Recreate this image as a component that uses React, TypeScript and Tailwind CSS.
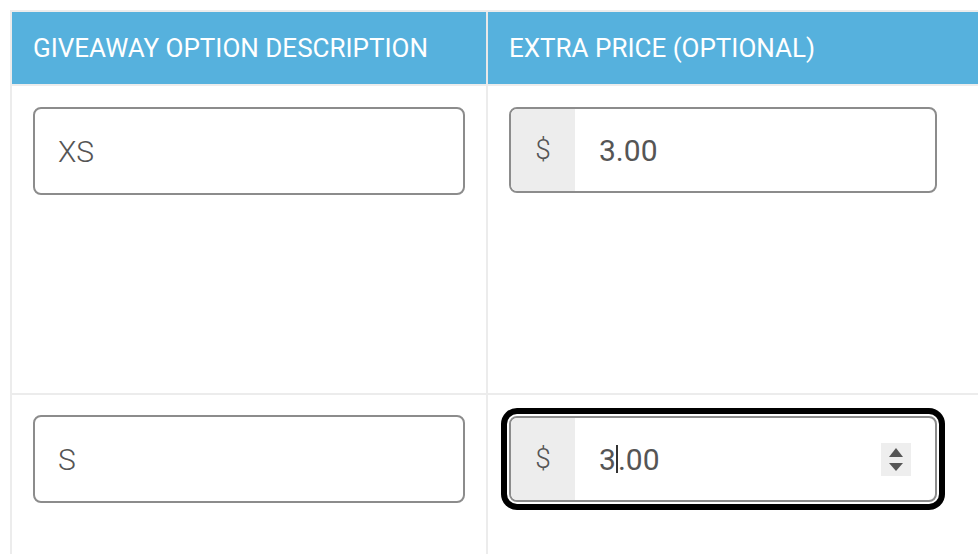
import React from 'react';

const font = { fontFamily: 'Roboto, "Liberation Sans", sans-serif' };

const TextBox = ({ value }: { value: string }) => (
  <div className="flex h-[88px] w-[432px] items-center rounded-[8px] border-2 border-[#8c8c8c] bg-white pl-[23px] text-[30px] font-light text-[#555]">
    {value}
  </div>
);

const PriceBox = ({ value, focused = false }: { value: string; focused?: boolean }) => (
  <div
    className={
      'flex h-[86px] w-[428px] overflow-hidden rounded-[8px] border-2 border-[#8c8c8c] bg-white text-[30px] text-[#555] ' +
      (focused ? 'shadow-[0_0_0_2px_#fff,0_0_0_8px_#000]' : '')
    }
  >
    <div className="flex w-[64px] items-center justify-center bg-[#ededed] text-[28px] font-light">$</div>
    <div className="flex flex-1 items-center pl-[24px]">
      {focused ? (
        <>
          <span>3</span>
          <span className="h-[28px] w-[2px] bg-[#333]" />
          <span>{value.slice(1)}</span>
        </>
      ) : (
        value
      )}
      {focused && (
        <div className="ml-auto mr-[24px] flex h-[33px] w-[30px] flex-col items-center justify-center gap-[6px] bg-[#eeeeee]">
          <svg width="14" height="9" viewBox="0 0 14 9">
            <polygon points="7,0 14,9 0,9" fill="#555" />
          </svg>
          <svg width="14" height="8" viewBox="0 0 14 8">
            <polygon points="0,0 14,0 7,8" fill="#555" />
          </svg>
        </div>
      )}
    </div>
  </div>
);

export default function App() {
  return (
    <div className="h-[554px] w-[978px] overflow-hidden bg-white pl-[10px] pt-[10px]" style={font}>
      <div className="w-[1000px] border-l-2 border-t-2 border-[#ececec]">
        {/* Header */}
        <div className="flex h-[72px] bg-[#56b1dd] text-[26px] text-white">
          <div className="flex w-[474px] items-center pl-[21px]">GIVEAWAY OPTION DESCRIPTION</div>
          <div className="w-[2px] bg-[#e8e8e8]" />
          <div className="flex flex-1 items-center pl-[21px]">EXTRA PRICE (OPTIONAL)</div>
        </div>
        <div className="h-[2px] bg-[#ececec]" />

        {/* Row 1 */}
        <div className="flex h-[307px]">
          <div className="w-[474px] pl-[21px] pt-[21px]">
            <TextBox value="XS" />
          </div>
          <div className="w-[2px] bg-[#ececec]" />
          <div className="flex-1 pl-[21px] pt-[21px]">
            <PriceBox value="3.00" />
          </div>
        </div>
        <div className="h-[2px] bg-[#ececec]" />

        {/* Row 2 */}
        <div className="flex h-[200px]">
          <div className="w-[474px] pl-[21px] pt-[20px]">
            <TextBox value="S" />
          </div>
          <div className="w-[2px] bg-[#ececec]" />
          <div className="flex-1 pl-[21px] pt-[21px]">
            <PriceBox value="3.00" focused />
          </div>
        </div>
      </div>
    </div>
  );
}
